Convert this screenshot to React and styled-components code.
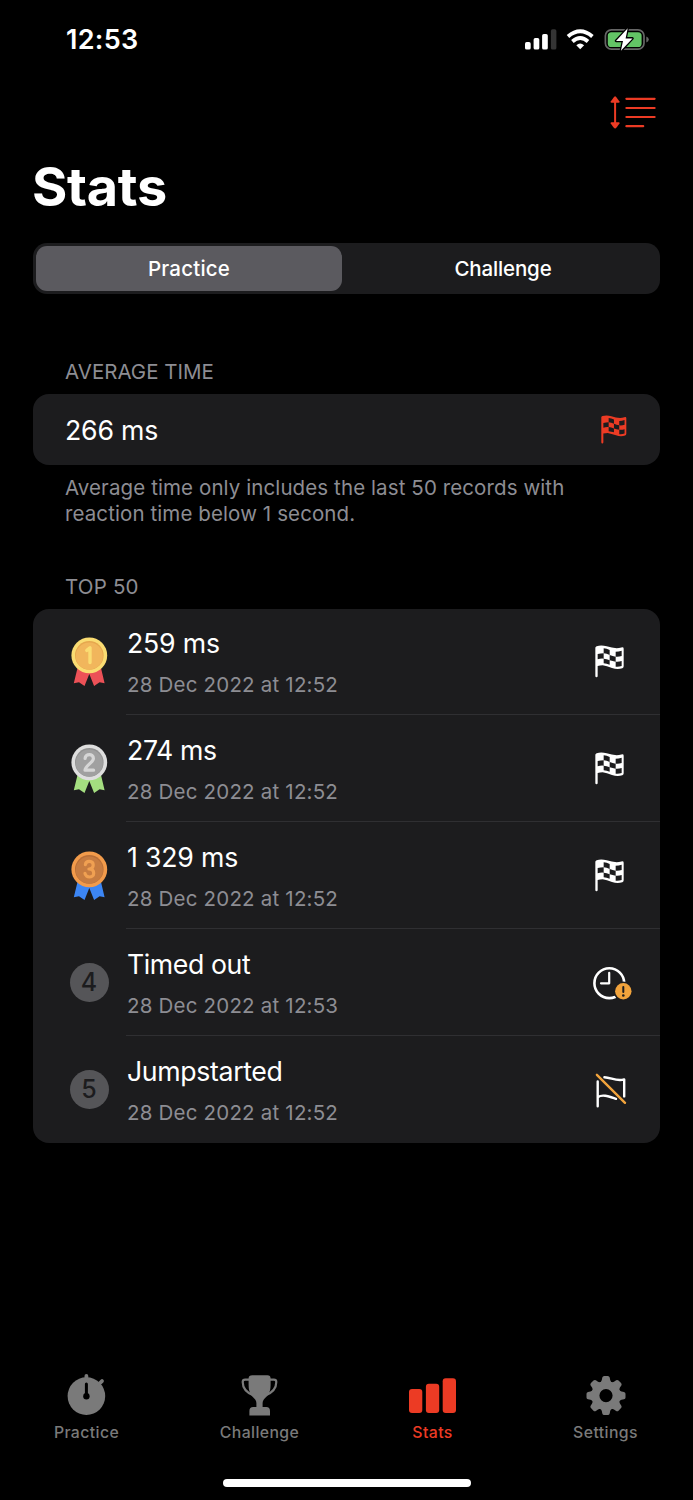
import React from "react";
import styled, { createGlobalStyle } from "styled-components";

const GlobalStyle = createGlobalStyle`
    * {
        box-sizing: border-box;
    }

    body {
        margin: 0;
        background: #000;
        color: #fff;
        font-family: Inter, "Liberation Sans", sans-serif;
    }

    svg {
        display: block;
        flex: none;
    }
`;

const Screen = styled.div`
    width: 693px;
    height: 1500px;
    display: flex;
    flex-direction: column;
    overflow: hidden;
    background: #000;
`;

const StatusBar = styled.header`
    display: flex;
    align-items: center;
    justify-content: space-between;
    height: 80px;
    padding: 0 43px 0 66px;
`;

const Clock = styled.span`
    font-size: 27px;
    font-weight: 600;
    line-height: 32px;
    letter-spacing: 0.3px;
`;

const Toolbar = styled.div`
    display: flex;
    justify-content: flex-end;
    height: 64px;
    padding: 15px 36px 0 0;
`;

const Title = styled.h1`
    margin: 8px 32px 0;
    height: 70px;
    font-size: 54px;
    font-weight: 700;
    line-height: 70px;
    letter-spacing: -0.3px;
`;

const Segments = styled.div`
    display: flex;
    height: 51px;
    margin: 21px 33px 0;
    padding: 3px;
    border-radius: 14px;
    background: #1c1c1e;
`;

const Segment = styled.button`
    flex: ${(props) => (props.$active ? "0 0 306px" : "1")};
    border: none;
    border-radius: 11px;
    padding: ${(props) => (props.$active ? "0" : "0 0 0 7px")};
    background: ${(props) => (props.$active ? "#5b5a5f" : "none")};
    color: #fff;
    font-family: inherit;
    font-size: 20.5px;
    font-weight: 500;
    letter-spacing: ${(props) => (props.$active ? 0.2 : -0.15)}px;
`;

const SectionLabel = styled.h2`
    margin: ${(props) => props.$top}px 0 0 65px;
    height: 26px;
    font-size: 20.5px;
    font-weight: 400;
    line-height: 26px;
    color: #8d8d93;
    letter-spacing: ${(props) => props.$spacing || 0}px;
`;

const Card = styled.section`
    margin: 9px 33px 0;
    border-radius: 16px;
    background: #1c1c1e;
    overflow: hidden;
`;

const AverageRow = styled.div`
    display: flex;
    align-items: center;
    justify-content: space-between;
    height: 71px;
    padding: 0 33px 0 32px;
`;

const Value = styled.div`
    font-size: 26.7px;
    line-height: 34px;
    letter-spacing: ${(props) => props.$spacing || -0.2}px;
    white-space: nowrap;
`;

const Footnote = styled.p`
    margin: 10px 65px 0;
    font-size: 20.5px;
    line-height: 26px;
    color: #8d8d93;
    letter-spacing: 0.1px;
    white-space: nowrap;
`;

const Row = styled.div`
    display: flex;
    height: 106.9px;
`;

const Rank = styled.div`
    flex: 0 0 93px;
    display: flex;
    align-items: flex-start;
    padding: 27.5px 0 0 36px;
`;

const RowBody = styled.div`
    flex: 1;
    display: flex;
    justify-content: space-between;
    padding-top: 17.6px;
    border-bottom: ${(props) => (props.$last ? "none" : "1px solid #2f2f32")};
`;

const RowText = styled.div`
    display: flex;
    flex-direction: column;
    gap: 13px;
    padding-left: 1px;
`;

const DateText = styled.div`
    font-size: 20.5px;
    line-height: 24px;
    color: #8d8d93;
    letter-spacing: 0.2px;
    white-space: nowrap;
`;

const RowIcon = styled.div`
    width: 70px;
    padding-top: 16px;
`;

const TabBar = styled.nav`
    display: grid;
    grid-template-columns: repeat(4, 1fr);
    width: 692px;
    height: 96px;
    margin-top: auto;
`;

const Tab = styled.a`
    display: flex;
    flex-direction: column;
    align-items: center;
    color: ${(props) => (props.$active ? "#ec3b24" : "#7a7a7a")};
`;

const TabLabel = styled.span`
    font-size: 15.8px;
    font-weight: 500;
    line-height: 20px;
    margin-top: 7px;
    letter-spacing: 0.4px;
`;

const HomeIndicator = styled.div`
    width: 248px;
    height: 8px;
    margin: 9px auto 13px;
    border-radius: 4px;
    background: #fff;
`;

const StatusIcons = () => (
    <svg width="126" height="28" viewBox="524 26 126 28">
        <g fill="#fff">
            <rect x="525" y="42" width="5.7" height="7.6" rx="1.7" />
            <rect x="533.6" y="38" width="5.7" height="11.6" rx="1.7" />
            <rect x="542.1" y="34" width="5.7" height="15.6" rx="1.7" />
            <rect x="550.9" y="29.2" width="5.5" height="20.4" rx="1.7" fill="#343434" />
        </g>
        <g fill="none" stroke="#fff" strokeWidth="3.9">
            <path d="M568 36.5Q580.2 26.2 592.4 36.5" />
            <path d="M572.4 41.4Q580.2 34.8 588 41.4" />
        </g>
        <path d="M576.3 45.2Q580.2 42 584.1 45.2L580.2 49.2Z" fill="#fff" />
        <rect x="605.4" y="29.8" width="38.6" height="19.4" rx="6" fill="none" stroke="#666" strokeWidth="1.7" />
        <rect x="607.8" y="32.2" width="33.8" height="14.8" rx="3.6" fill="#63c466" />
        <path d="M646.3 36.6Q648.8 37.5 648.8 39.5T646.3 42.5Z" fill="#666" />
        <path
            d="M627.7 28.3L616 40.9H623L620.9 50.8L632.5 38.4H625.6Z"
            fill="#fff"
            stroke="#000"
            strokeWidth="2.6"
            strokeLinejoin="round"
            paintOrder="stroke"
        />
    </svg>
);

const SortIcon = () => (
    <svg width="48" height="36" viewBox="609 95 48 36" fill="#ec3b24">
        <path d="M615.1 99V126" stroke="#ec3b24" strokeWidth="2" />
        <path d="M615.1 96.3Q615.8 96.3 619.5 101.5Q620 102.8 618.6 102.8H611.6Q610.2 102.8 610.7 101.5Q614.4 96.3 615.1 96.3Z" />
        <path d="M615.1 128.8Q615.8 128.8 619.5 123.6Q620 122.2 618.6 122.2H611.6Q610.2 122.2 610.7 123.6Q614.4 128.8 615.1 128.8Z" />
        <path
            d="M626.4 98.8H654.6M626.4 108H654.6M626.4 117H654.6M626.4 126.2H643.2"
            stroke="#ec3b24"
            strokeWidth="2.2"
            strokeLinecap="round"
        />
    </svg>
);

const CheckeredFlag = ({ color = "#fff", width = 30 }) => (
    <svg width={width} height={width * 1.1} viewBox="47 32 90 99">
        <path
            d="M48 40Q48 37 52 35.5Q66 31 82 36T112 42Q119 42 126 39.5Q133 37.5 133 43V96Q133 100 129 102Q114 107 98 101T70 93Q62 93 55 95V125Q55 129 51.5 129T48 125Z"
            fill={color}
        />
        <path
            d="M73 42Q82 43 91 47V62Q82 58 73 57ZM109 52Q118 52 127 49V65Q118 68 109 67ZM55 59Q64 57 73 57V73Q64 72 55 75ZM91 62Q100 66 109 67V82Q100 81 91 78ZM73 73Q82 74 91 78V91Q82 88 73 87ZM109 82Q118 83 127 80V95Q118 98 109 97Z"
            fill="#1c1c1e"
        />
    </svg>
);

const TimeoutIcon = () => (
    <svg width="42" height="36" viewBox="591 965 42 36" fill="none">
        <circle cx="609.3" cy="983.2" r="14.9" stroke="#fff" strokeWidth="2.6" />
        <path d="M609.2 972.8V983.3H601" stroke="#fff" strokeWidth="2.2" strokeLinecap="round" strokeLinejoin="round" />
        <circle cx="623.3" cy="991.3" r="9.8" fill="#1c1c1e" />
        <circle cx="623.3" cy="991.3" r="8.2" fill="#f1a33c" />
        <path d="M623.3 987V992" stroke="#1c1c1e" strokeWidth="2" strokeLinecap="round" />
        <circle cx="623.3" cy="995.5" r="1.3" fill="#1c1c1e" />
    </svg>
);

const FlagOffIcon = () => (
    <svg width="34" height="38" viewBox="595 1071 34 38" fill="none" strokeLinecap="round">
        <g stroke="#fff" strokeWidth="2.4" strokeLinejoin="round">
            <path d="M597.7 1080.5V1105.3M597.7 1096.2C602.5 1092.8 609 1095.5 616 1097.8" />
            <path d="M604.4 1076.2C611 1076.4 617 1081 624.2 1078.4V1095.4" />
        </g>
        <path d="M596.9 1073.8L625 1101.8" stroke="#f1a33c" strokeWidth="2.4" />
    </svg>
);

const medals = {
    1: { rim: "#fadc72", face: "#f1b65c", edge: "#e6a74e", digit: "#fadc72", ribbon: "#ec5157" },
    2: { rim: "#dedede", face: "#a0a0a0", edge: "#929292", digit: "#d6d6d6", ribbon: "#a4de80" },
    3: { rim: "#f29b4b", face: "#c77c41", edge: "#b96f38", digit: "#f0a052", ribbon: "#3c86f5" },
};

const Medal = ({ place }) => {
    const c = medals[place];

    return (
        <svg width="40" height="52" viewBox="69 636 40 52">
            <path d="M77.5 668L73.8 683.2L79 682.2L84.5 686L89.3 674L94.1 686L99.6 682.2L104.6 683.2L101 668Z" fill={c.ribbon} />
            <circle cx="89.3" cy="655.4" r="17.9" fill={c.rim} />
            <circle cx="89.3" cy="655.4" r="14.3" fill={c.edge} />
            <circle cx="89.3" cy="656" r="13.6" fill={c.face} />
            {place === 1 ? (
                <path d="M86.8 650.4L90 647.8V662.6" fill="none" stroke={c.digit} strokeWidth="3.4" strokeLinecap="round" strokeLinejoin="round" />
            ) : place === 2 ? (
                <path d="M85.1 651.4C85.3 646.4 93.4 646.4 93.4 651.4C93.4 655.4 85 659 85 663.2H93.6" fill="none" stroke={c.digit} strokeWidth="3.2" strokeLinecap="round" strokeLinejoin="round" />
            ) : (
                <path d="M85.4 650.6C86 646 93.2 646.4 93.2 651C93.2 653.8 91.5 655 88.9 655C91.7 655 93.7 656.4 93.7 659.2C93.7 664.3 85.2 664.2 85 659.3" fill="none" stroke={c.digit} strokeWidth="3.2" strokeLinecap="round" strokeLinejoin="round" />
            )}
        </svg>
    );
};

const NumberBadge = styled.span`
    display: flex;
    align-items: center;
    justify-content: center;
    width: 39px;
    height: 39px;
    margin: 6px 0 0 1px;
    padding-right: 1px;
    border-radius: 50%;
    background: #555558;
    color: #1c1c1e;
    font-size: 25px;
    font-weight: 500;
`;

const StopwatchIcon = () => (
    <svg width="42" height="42" viewBox="66 1373.5 42 42" fill="currentColor">
        <circle cx="86.4" cy="1395.6" r="18.8" />
        <path d="M86.4 1375.5V1379M99.5 1383L102 1380.6" stroke="currentColor" strokeWidth="3.8" strokeLinecap="round" />
        <path d="M86.4 1383.6V1395" stroke="#000" strokeWidth="3" strokeLinecap="round" />
        <circle cx="86.4" cy="1395.7" r="3.2" fill="#000" />
    </svg>
);

const TrophyIcon = () => (
    <svg width="42" height="42" viewBox="238.6 1374 42 42" fill="currentColor">
        <path d="M252 1375.2H267Q270.2 1375.2 270.2 1378.5V1385C270.2 1394 266.5 1396 263.4 1399.5Q262.2 1401 262.2 1403V1407H265.8Q269.6 1407 269.6 1411V1415.5H249V1411Q249 1407 252.8 1407H256V1403Q256 1401 254.8 1399.5C251.7 1396 248.2 1394 248.2 1385V1378.5Q248.2 1375.2 252 1375.2Z" />
        <path d="M249.5 1379.7H244.8Q242.3 1379.7 242.3 1382C242.3 1387.5 245.8 1392.6 253.2 1395.4M269 1379.7H273.4Q275.9 1379.7 275.9 1382C275.9 1387.5 272.4 1392.6 265 1395.4" fill="none" stroke="currentColor" strokeWidth="2.2" />
    </svg>
);

const BarsIcon = () => (
    <svg width="50" height="42" viewBox="408 1374 50 42" fill="currentColor">
        <rect x="409" y="1389" width="13.3" height="24" rx="3" />
        <rect x="425.9" y="1383.7" width="13.3" height="29.3" rx="3" />
        <rect x="442.7" y="1378.2" width="13.3" height="34.8" rx="3" />
    </svg>
);

const GearIcon = () => (
    <svg width="42" height="42" viewBox="-21 -21.6 42 42" fill="currentColor">
        <circle r="10.6" fill="none" stroke="currentColor" strokeWidth="8" />
        {[0, 45, 90, 135, 180, 225, 270, 315].map((angle) => (
            <path
                key={angle}
                transform={`rotate(${angle})`}
                d="M-6.6 -12.5Q-4.8 -13.2 -4.2 -15.5L-3.7 -18Q-3.3 -19.5 -1.8 -19.5H1.8Q3.3 -19.5 3.7 -18L4.2 -15.5Q4.8 -13.2 6.6 -12.5Z"
            />
        ))}
    </svg>
);

const records = [
    { value: "259 ms", date: "28 Dec 2022 at 12:52", icon: "flag" },
    { value: "274 ms", date: "28 Dec 2022 at 12:52", icon: "flag", spacing: -0.4 },
    { value: "1 329 ms", date: "28 Dec 2022 at 12:52", icon: "flag" },
    { value: "Timed out", date: "28 Dec 2022 at 12:53", icon: "timeout", spacing: -0.42 },
    { value: "Jumpstarted", date: "28 Dec 2022 at 12:52", icon: "jump", spacing: -0.36 },
];

const ResultIcon = ({ type }) => {
    if (type === "timeout") {
        return <TimeoutIcon />;
    }
    if (type === "jump") {
        return <FlagOffIcon />;
    }
    return <CheckeredFlag />;
};

const IconShift = styled.div`
    margin-left: ${(props) => (props.$type === "flag" ? 5 : props.$type === "jump" ? 5 : 1)}px;
    margin-top: ${(props) => (props.$type === "flag" ? 3.3 : 1.9)}px;
`;

export default function App() {
    return (
        <Screen>
            <GlobalStyle />
            <StatusBar>
                <Clock>12:53</Clock>
                <StatusIcons />
            </StatusBar>
            <Toolbar>
                <SortIcon />
            </Toolbar>
            <Title>Stats</Title>
            <Segments>
                <Segment $active>Practice</Segment>
                <Segment>Challenge</Segment>
            </Segments>

            <SectionLabel $top={65}>AVERAGE TIME</SectionLabel>
            <Card>
                <AverageRow>
                    <Value>266 ms</Value>
                    <CheckeredFlag color="#ec3b24" width={26.5} />
                </AverageRow>
            </Card>
            <Footnote>
                Average time only includes the last 50 records with
                <br />
                reaction time below 1 second.
            </Footnote>

            <SectionLabel $top={46.6} $spacing={0.2}>TOP 50</SectionLabel>
            <Card>
                {records.map((record, i) => (
                    <Row key={i}>
                        <Rank>{i < 3 ? <Medal place={i + 1} /> : <NumberBadge>{i + 1}</NumberBadge>}</Rank>
                        <RowBody $last={i === records.length - 1}>
                            <RowText>
                                <Value $spacing={record.spacing}>{record.value}</Value>
                                <DateText>{record.date}</DateText>
                            </RowText>
                            <RowIcon>
                                <IconShift $type={record.icon}>
                                    <ResultIcon type={record.icon} />
                                </IconShift>
                            </RowIcon>
                        </RowBody>
                    </Row>
                ))}
            </Card>

            <TabBar>
                <Tab>
                    <StopwatchIcon />
                    <TabLabel>Practice</TabLabel>
                </Tab>
                <Tab>
                    <TrophyIcon />
                    <TabLabel>Challenge</TabLabel>
                </Tab>
                <Tab $active>
                    <BarsIcon />
                    <TabLabel>Stats</TabLabel>
                </Tab>
                <Tab>
                    <GearIcon />
                    <TabLabel>Settings</TabLabel>
                </Tab>
            </TabBar>
            <HomeIndicator />
        </Screen>
    );
}
